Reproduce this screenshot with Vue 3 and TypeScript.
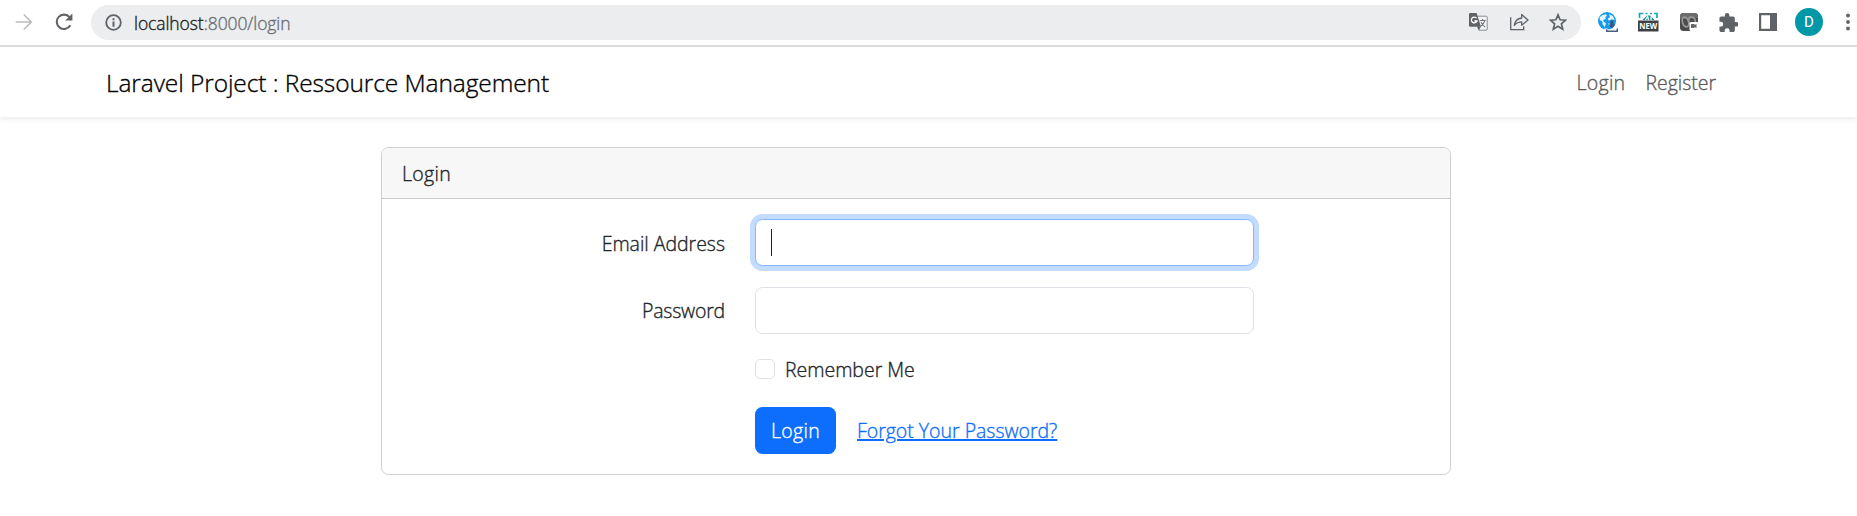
<script setup lang="ts">
import { ref } from 'vue'

const email = ref('')
const password = ref('')
const remember = ref(false)
const links: { label: string; cls: string }[] = [
  { label: 'Login', cls: 'login-text' },
  { label: 'Register', cls: 'nav-register' },
]
</script>

<template>
  <div class="page">
    <header class="toolbar">
      <svg class="forward" width="18" height="18" viewBox="0 0 18 18" fill="none" stroke="#babcbe" stroke-width="1.7">
        <path d="M0.7 9H16M8.8 1.5L16.3 9L8.8 16.5" />
      </svg>
      <svg class="reload" width="18" height="18" viewBox="0 0 18 18">
        <path d="M15.3 12.2A7.2 7.2 0 1 1 14.5 4.2" fill="none" stroke="#5f6368" stroke-width="2.1" />
        <path d="M17.4 0.4V7.6H10.2Z" fill="#5f6368" />
      </svg>
      <div class="address">
        <svg class="info" width="17" height="17" viewBox="0 0 17 17">
          <circle cx="8.5" cy="8.5" r="7.3" fill="none" stroke="#5f6368" stroke-width="1.8" />
          <path d="M7.5 4.2h2v2h-2zM7.5 7.5h2v5.2h-2z" fill="#5f6368" />
        </svg>
        <span class="url"><span class="host">localhost</span>:8000/login</span>
        <svg class="translate" width="19" height="18" viewBox="0 0 19 18">
          <path d="M7 3.2h10.2a1 1 0 0 1 1 1v12a1 1 0 0 1-1 1H10z" fill="#f3f4f5" stroke="#8a8d91" stroke-width="1" />
          <path d="M1.2 0h6.4L12 13.7H1.2A1.2 1.2 0 0 1 0 12.500V1.200A1.200 1.200 0 0 1 1.200 0z" fill="#5f6368" />
          <path d="M8 13.700h4L9.800 17.200z" fill="#5f6368" />
          <path d="M7.600 5.200A2.900 2.900 0 1 0 8 8H5.400" fill="none" stroke="#fff" stroke-width="1.300" />
          <path d="M10.700 7.500h6M13.600 6v1.500M15.700 7.700c-.5 2.500-2 4.300-4 5.500M12 9.200c.8 1.800 2.300 3.600 4.200 4.700" fill="none" stroke="#73767a" stroke-width="1.100" />
        </svg>
        <svg class="share" width="19" height="18" viewBox="0 0 19 18" fill="none" stroke="#5f6368" stroke-width="1.3">
          <path d="M0.7 4.200V16.600H13.700V13.200" />
          <path d="M4.300 12.300C5 8 7.500 5.500 11.700 5V1.500L18 7.100L11.700 12.200V8.900C8.400 8.900 6.300 10 4.300 12.300Z" stroke-linejoin="round" />
        </svg>
        <svg class="star" width="18" height="18" viewBox="0 0 18 18">
          <path d="M9 1.800L11.100 6.800L16.600 7.200L12.400 10.800L13.700 16.200L9 13.300L4.300 16.200L5.600 10.800L1.400 7.200L6.900 6.800Z" fill="none" stroke="#5f6368" stroke-width="1.700" />
        </svg>
      </div>
      <svg class="globe" width="21" height="21" viewBox="0 0 21 21">
        <circle cx="9" cy="9" r="9" fill="#159bec" />
        <path d="M1.500 5.500L4 3.200L8 2.200L9 4L7.200 5L8 6.700L5.200 8L5.800 10L8 11.200L6.800 15L4.700 12.500L4.300 9.500L1.800 8ZM11 2L15 4.200L16.700 8L13.800 7.200L11 8.800L9.700 6.500L12 5.200ZM10 11L12 12L11 14Z" fill="#e5f5fe" />
        <path d="M12.400 8.500h3v4h2l-3.500 4l-3.500-4h2z" fill="#3a587f" />
        <path d="M8 16.500V19.300H20V16.500" fill="none" stroke="#fff" stroke-width="3.500" />
        <path d="M8.700 17.300V19.300H19.300V16.600" fill="none" stroke="#495d80" stroke-width="1.500" />
      </svg>
      <svg class="new" width="21" height="20" viewBox="0 0 21 20">
        <path d="M1.500 6V1.500h4M7.500 1.500h2M12 1.500h2M16 1.500h3V6" fill="none" stroke="#16a7b5" stroke-width="1.700" />
        <path d="M4.500 8L9 3.500H12L16.500 8Z" fill="#128b99" />
        <path d="M7.500 8L9.600 4.500L10.600 8M13 4.500V8" fill="none" stroke="#e8ffff" stroke-width="1.400" />
        <path d="M0 8.500h20.500v11H0z" fill="#3e4144" />
        <text x="10.250" y="17" text-anchor="middle" textLength="18" lengthAdjust="spacingAndGlyphs">NEW</text>
      </svg>
      <svg class="recorder" width="19" height="19" viewBox="0 0 19 19">
        <rect width="18" height="18" rx="3.500" fill="#4c4c4d" />
        <path d="M0 6V3.500A3.500 3.500 0 0 1 3.500 0h11A3.500 3.500 0 0 1 18 3.500V5z" fill="#6b6b6c" />
        <ellipse cx="5.500" cy="9" rx="3" ry="5" fill="none" stroke="#999" stroke-width="1.700" transform="rotate(-18 5.500 9)" />
        <path d="M9 4.500Q15 2.500 15.500 9M9 4.500Q8 8 10 11" fill="none" stroke="#999" stroke-width="1.700" />
        <rect x="9.500" y="9" width="9" height="9" rx="1.500" fill="#fff" />
        <path d="M11 11h3.500v1l2-1v4l-2-1v1H11z" fill="#666" />
      </svg>
      <svg class="puzzle" width="19" height="19" viewBox="1.500 1 21 21">
        <path d="M20.500 11H19V7c0-1.100-.9-2-2-2h-4V3.500a2.500 2.500 0 0 0-5 0V5H4c-1.100 0-1.990.9-1.990 2v3.800H3.500a2.700 2.700 0 0 1 0 5.400H2V20c0 1.100.9 2 2 2h3.800v-1.500a2.700 2.700 0 0 1 5.400 0V22H17c1.100 0 2-.9 2-2v-4h1.500a2.500 2.500 0 0 0 0-5z" fill="#5f6368" />
      </svg>
      <svg class="panel" width="18" height="18" viewBox="0 0 18 18">
        <path d="M0 0h18v18H0zM2.200 2.300v13.400h8.800V2.300z" fill="#5f6368" fill-rule="evenodd" />
      </svg>
      <span class="avatar">D</span>
      <svg class="more" width="4" height="18" viewBox="0 0 4 18" fill="#5f6368">
        <circle cx="2" cy="2.500" r="1.900" /><circle cx="2" cy="9" r="1.900" /><circle cx="2" cy="15.500" r="1.900" />
      </svg>
    </header>

    <nav class="navbar">
      <a class="brand">Laravel Project : Ressource Management</a>
      <div class="links">
        <a v-for="link in links" :key="link.label" :class="link.cls">{{ link.label }}</a>
      </div>
    </nav>

    <main class="main">
      <section class="card">
        <div class="card-header"><span class="login-text">Login</span></div>
        <form class="card-body" @submit.prevent>
          <div class="row">
            <label class="label email-label" for="email">Email Address</label>
            <div class="field">
              <input id="email" v-model="email" class="input focused" type="email" />
              <span class="caret"></span>
            </div>
          </div>
          <div class="row">
            <label class="label password-label" for="password">Password</label>
            <div class="field">
              <input id="password" v-model="password" class="input" type="password" />
            </div>
          </div>
          <div class="remember">
            <input id="remember" v-model="remember" class="check" type="checkbox" />
            <label class="remember-label" for="remember">Remember Me</label>
          </div>
          <div class="actions">
            <button class="submit" type="submit"><span class="login-text">Login</span></button>
            <a class="forgot">Forgot Your Password?</a>
          </div>
        </form>
      </section>
    </main>
  </div>
</template>

<style>
body {
  margin: 0;
  background: #fff;
}
</style>

<style scoped>
* {
  box-sizing: border-box;
}
.page {
  height: 516px;
  overflow: hidden;
  background: #fff;
  color: #212529;
  font-family: 'Open Sans', 'Noto Sans', sans-serif;
  font-size: 19.500px;
  font-weight: 300;
  letter-spacing: -0.020px;
  line-height: 30px;
  white-space: nowrap;
  -webkit-text-stroke: 0.350px currentColor;
}
svg {
  display: block;
  flex: none;
}
.login-text {
  letter-spacing: 0.300px;
}
.toolbar {
  display: flex;
  align-items: center;
  height: 47px;
  padding: 0 0 1px 15px;
  border-bottom: 2px solid #dadbdc;
}
.reload {
  margin-left: 22px;
}
.address {
  display: flex;
  flex: none;
  align-items: center;
  width: 1490px;
  height: 35px;
  margin-left: 18px;
  padding-left: 14px;
  border-radius: 18px;
  background: #ebedef;
}
.url {
  margin-left: 12px;
  padding-top: 1px;
  color: #6b6f74;
  font-size: 17.500px;
  letter-spacing: -0.080px;
}
.host {
  color: #202124;
}
.translate {
  margin-left: auto;
}
.share {
  margin-left: 22px;
}
.star {
  margin: 0 14px 0 20px;
}
.globe {
  margin-left: 17px;
}
.new {
  margin-left: 19px;
}
.new text {
  fill: #fff;
  font: 700 8px 'Open Sans', sans-serif;
  letter-spacing: 0;
  -webkit-text-stroke: 0;
}
.recorder {
  margin-left: 21px;
}
.puzzle {
  margin-left: 20px;
}
.panel {
  margin-left: 21px;
}
.avatar {
  flex: none;
  width: 28px;
  height: 28px;
  margin-left: 18px;
  border-radius: 50%;
  background: #0097a7;
  color: #fff;
  font: 15px/28px Roboto, sans-serif;
  text-align: center;
  -webkit-text-stroke: 0;
}
.more {
  margin-left: 23px;
}
.navbar {
  display: flex;
  align-items: center;
  justify-content: space-between;
  height: 70px;
  padding: 2px 141px 0 106px;
  box-shadow: 0 2.500px 5px rgba(0, 0, 0, 0.075);
}
.brand {
  color: #000;
  font-size: 24.500px;
  letter-spacing: -0.090px;
}
.links {
  display: flex;
  gap: 20px;
  color: #595959;
}
.main {
  display: flex;
  justify-content: center;
  padding: 30px 25px 0 0;
}
.card {
  width: 1070px;
  height: 328px;
  border: 1px solid #cfcfcf;
  border-radius: 7.500px;
  overflow: hidden;
}
.card-header {
  height: 51px;
  padding: 11px 20px 0;
  border-bottom: 1px solid #cbcbcb;
  background: #f7f7f7;
}
.card-body {
  display: flex;
  flex-direction: column;
  padding-top: 20px;
}
.row {
  display: flex;
  height: 47px;
  margin-bottom: 21px;
}
.label {
  width: 343px;
  margin-right: 30px;
  padding-top: 10px;
  text-align: right;
}
.password-label {
  padding-top: 9px;
  letter-spacing: -0.200px;
}
.field {
  position: relative;
  width: 499px;
}
.input {
  display: block;
  width: 100%;
  height: 47px;
  padding: 8px 15px;
  border: 1px solid #dee2e6;
  border-radius: 7.500px;
  outline: none;
  background: #fff;
}
.focused {
  border-color: #86b7fe;
  box-shadow: 0 0 0 5px #c2dbff;
}
.caret {
  position: absolute;
  left: 16px;
  top: 10px;
  width: 1px;
  height: 27px;
  background: #212529;
}
.remember {
  display: flex;
  height: 30px;
  margin: 0 0 22px 373px;
}
.check {
  appearance: none;
  width: 20px;
  height: 20px;
  margin: 4px 10px 0 0;
  border: 1px solid #dee2e6;
  border-radius: 5px;
  background: #fff;
}
.actions {
  display: flex;
  margin-left: 373px;
}
.submit {
  width: 81px;
  height: 47px;
  padding: 0;
  border: 0;
  border-radius: 7.500px;
  background: #0d6efd;
  color: #fff;
  font: inherit;
}
.forgot {
  margin: 9px 0 0 21px;
  color: #0d6efd;
  text-decoration: underline;
  text-decoration-thickness: 2px;
}
</style>
